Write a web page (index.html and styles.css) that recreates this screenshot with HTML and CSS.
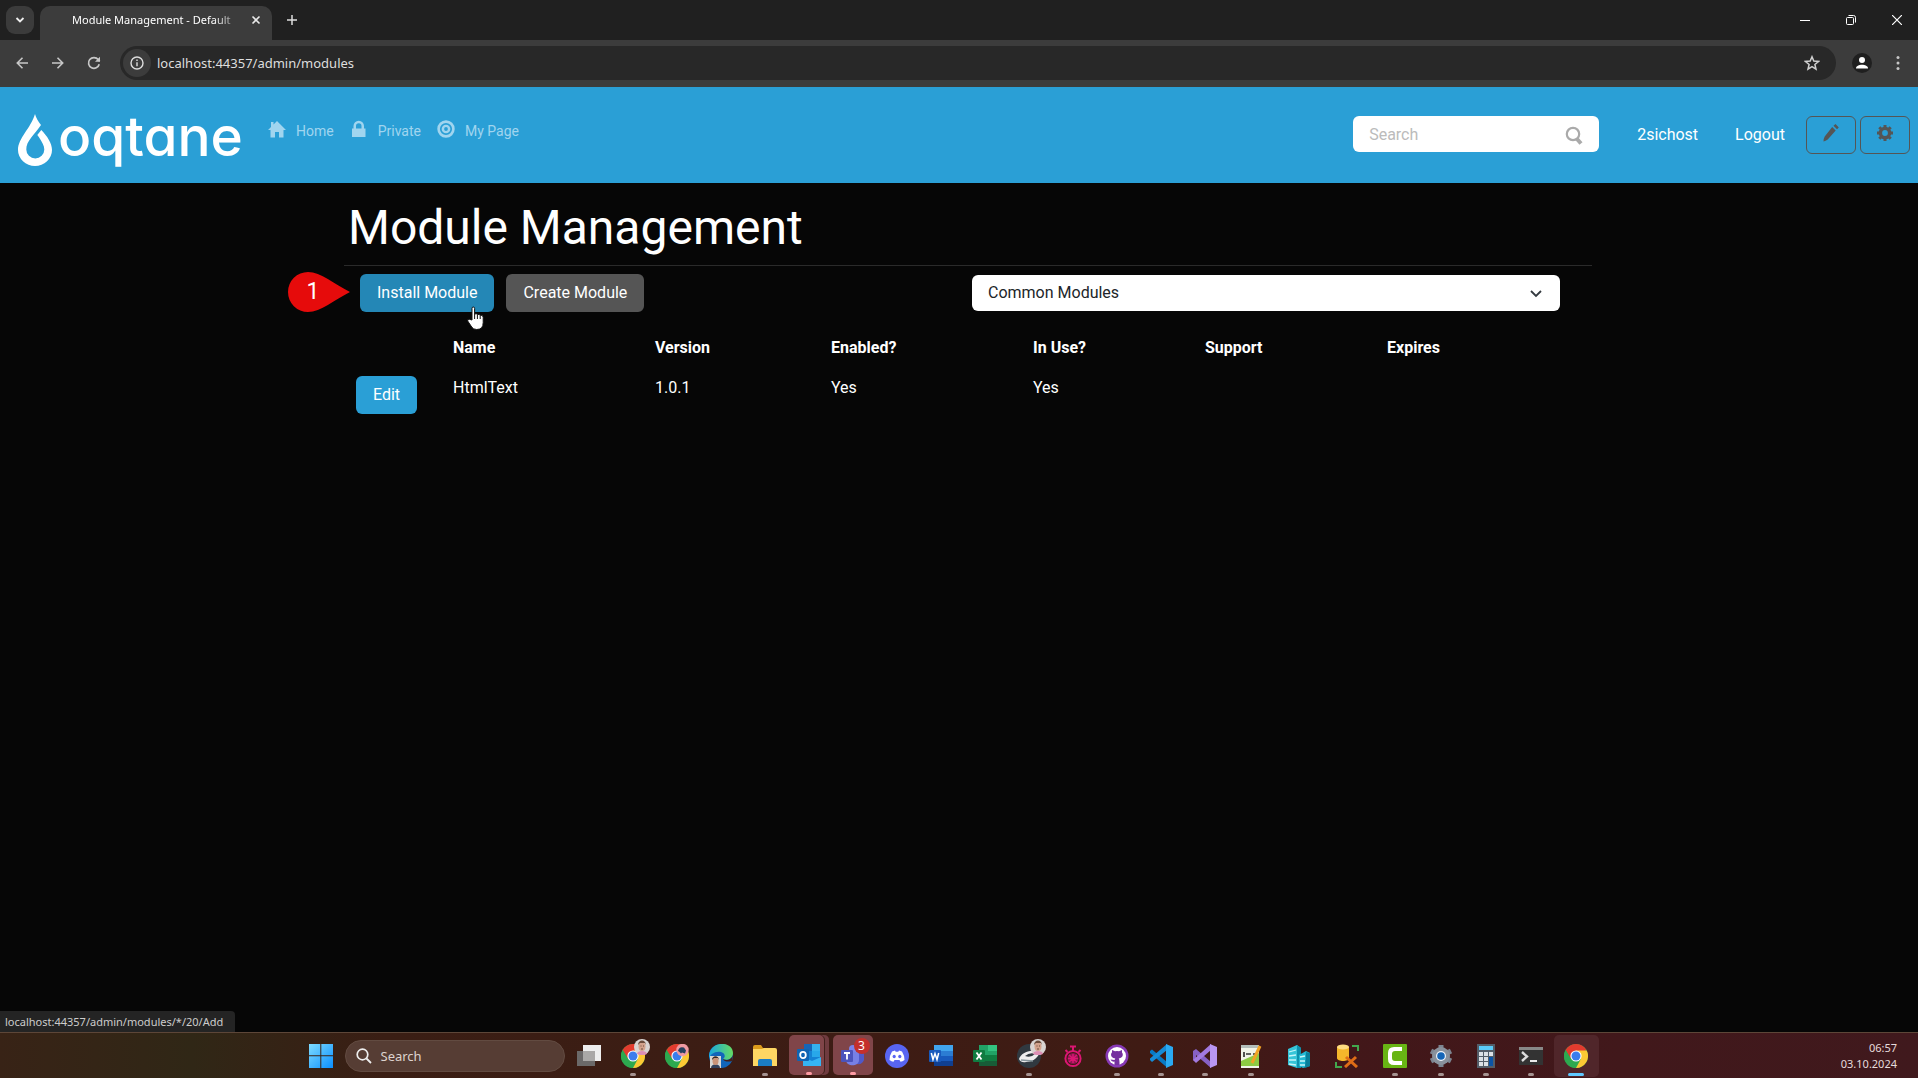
FILE: index.html
```html
<!DOCTYPE html>
<html lang="en">
<head>
<meta charset="UTF-8">
<meta name="viewport" content="width=device-width, initial-scale=1.0">
<title>Module Management - Default</title>
<link rel="stylesheet" href="styles.css">
</head>
<body>
  <!-- shared icon parts -->
  <svg class="sprite" aria-hidden="true">
    <symbol id="chrome" viewBox="0 0 24 24">
      <circle cx="12" cy="12" r="12" fill="#2da94f"/>
      <path d="M12 12 1.600 6A12 12 0 0 1 22.400 6Z" fill="#e33b2e"/>
      <path d="M12 6.500h10.700A12 12 0 0 1 12 24l4.800-9Z" fill="#fcc934"/>
      <path d="M1.600 6 7 15l5-3V6Z" fill="#e33b2e"/>
      <path d="M1.600 6 7.200 15 12 17.500 12 24A12 12 0 0 1 1.600 6Z" fill="#2da94f"/>
      <circle cx="12" cy="12" r="5.600" fill="#fff"/>
      <circle cx="12" cy="12" r="4.500" fill="#3b7ded"/>
    </symbol>
    <symbol id="face" viewBox="0 0 16 16">
      <circle cx="8" cy="8" r="8" fill="#d9d4d2"/>
      <path d="M3 15c0-4 10-4 10 0l-3 1H6Z" fill="#dc8fb4"/>
      <ellipse cx="8" cy="7.500" rx="3.500" ry="4.500" fill="#d3a28c"/>
      <path d="M4 6c0-6 8-6 8 0l-1-2H6Z" fill="#6b4c3c"/>
      <path d="M6.500 7h1M9 7h1M7 10h2" stroke="#6b4c3c"/>
    </symbol>
  </svg>

  <header class="tab-strip">
    <button class="tab-search" aria-label="Search tabs">
      <svg width="12" height="12" viewBox="0 0 12 12"><path d="m2.500 4 3.500 3.500L9.500 4" fill="none" stroke="#eee" stroke-width="1.800"/></svg>
    </button>
    <div class="tab">
      <span class="tab-title">Module Management - Default</span>
      <button class="tab-close" aria-label="Close tab">
        <svg width="10" height="10" viewBox="0 0 10 10"><path d="m1.500 1.500 7 7m0-7-7 7" stroke="#e8e8e8" stroke-width="1.600"/></svg>
      </button>
    </div>
    <button class="new-tab" aria-label="New tab">
      <svg width="12" height="12" viewBox="0 0 12 12"><path d="M6 1v10M1 6h10" stroke="#ddd" stroke-width="1.500"/></svg>
    </button>
    <div class="window-buttons">
      <button aria-label="Minimize"><svg width="10" height="10" viewBox="0 0 10 10"><path d="M0 5.500h10" stroke="#fff"/></svg></button>
      <button aria-label="Restore"><svg width="10" height="10" viewBox="0 0 10 10"><path d="M.5 3.500q0-1 1-1h5q1 0 1 1v5q0 1-1 1h-5q-1 0-1-1ZM2.500.5h5q2 0 2 2v5" fill="none" stroke="#fff"/></svg></button>
      <button aria-label="Close"><svg width="10" height="10" viewBox="0 0 10 10"><path d="m0 0 10 10M10 0 0 10" stroke="#fff" stroke-width="1.200"/></svg></button>
    </div>
  </header>

  <div class="toolbar">
    <div class="nav-buttons">
      <button aria-label="Back"><svg width="12" height="12" viewBox="0 0 12 12"><path d="M12 6H1.500M6.500.8 1.300 6l5.200 5.200" fill="none" stroke="#c7c7c7" stroke-width="1.600"/></svg></button>
      <button aria-label="Forward"><svg width="12" height="12" viewBox="0 0 12 12"><path d="M0 6h10.500M5.500.8 10.700 6l-5.200 5.200" fill="none" stroke="#c7c7c7" stroke-width="1.600"/></svg></button>
      <button aria-label="Reload"><svg width="14" height="14" viewBox="0 0 14 14"><path d="M12.200 8.200a5.400 5.400 0 1 1-1-4.600l1.500 1.600" fill="none" stroke="#c7c7c7" stroke-width="1.700"/><path d="M13 .8v5H8Z" fill="#c7c7c7"/></svg></button>
    </div>
    <div class="address-bar">
      <button class="site-info" aria-label="View site information">
        <svg width="14" height="14" viewBox="0 0 14 14"><circle cx="7" cy="7" r="6" fill="none" stroke="#ddd" stroke-width="1.400"/><path d="M7 6.200v4M7 3.500v1.500" stroke="#ddd" stroke-width="1.400"/></svg>
      </button>
      <input class="address" type="text" value="localhost:44357/admin/modules" aria-label="Address">
      <button class="bookmark" aria-label="Bookmark this tab">
        <svg width="16" height="16" viewBox="0 0 16 16"><path d="m8 1.800 1.800 4.300 4.700.4-3.600 3 1.100 4.600L8 11.700l-4 2.400 1.100-4.600-3.600-3 4.700-.4Z" fill="none" stroke="#d0d0d0" stroke-width="1.500"/></svg>
      </button>
    </div>
    <button class="profile" aria-label="Profile">
      <svg width="20" height="20" viewBox="0 0 20 20"><circle cx="10" cy="10" r="10" fill="#1f1f1f"/><circle cx="10" cy="7" r="3" fill="#fff"/><path d="M4 15.500c0-5 12-5 12 0Z" fill="#fff"/></svg>
    </button>
    <button class="menu" aria-label="Menu">
      <svg width="4" height="16" viewBox="0 0 4 16"><g fill="#c7c7c7"><circle cx="2" cy="2.500" r="1.500"/><circle cx="2" cy="8" r="1.500"/><circle cx="2" cy="13.500" r="1.500"/></g></svg>
    </button>
  </div>

  <div class="page">
    <nav class="site-header">
      <a class="logo" href="#">
        <svg width="34" height="52" viewBox="0 0 34 52"><path d="M17 0c1 4 3 7 6 11C17 20 8 27 8.300 35.500a8.900 8.900 0 0 0 18 0c0-4-2.300-7.500-5.500-12.500l-1.500-2 4-5C29 22 34 29 34 36A17 16 0 0 1 0 36C0 24 13 14 17 0Z" fill="#fff"/></svg>
        <span class="wordmark">oqtane</span>
      </a>
      <ul class="site-menu">
        <li><a href="#">
          <svg width="18" height="18" viewBox="0 0 18 18"><path d="m9 1 9 9h-2.500v7.500H11V12H7v5.500H2.500V10H0l3-3V2h2.500v2.500Z" fill="currentColor"/></svg>
          Home</a></li>
        <li><a href="#">
          <svg width="18" height="18" viewBox="0 0 18 18"><path d="M2 8.500h1.500V6a5 5 0 0 1 10.500 0v2.500h1.500V17H2ZM6 8.500h5.500V6A2.700 2.700 0 0 0 6 6Z" fill="currentColor"/></svg>
          Private</a></li>
        <li><a href="#">
          <svg width="18" height="18" viewBox="0.5 -0.5 19 19"><g fill="none" stroke="currentColor"><circle cx="10" cy="9" r="7.800" stroke-width="2.800"/><circle cx="10" cy="9" r="3.300" stroke-width="2.600"/></g></svg>
          My Page</a></li>
      </ul>
      <form class="site-search">
        <input type="text" placeholder="Search" aria-label="Search">
        <button type="button" aria-label="Search">
          <svg width="18" height="20" viewBox="0 0 18 20"><circle cx="8" cy="8" r="6.200" fill="none" stroke="#aaa" stroke-width="2.200"/><path d="m12 13 4 4.500" stroke="#aaa" stroke-width="4"/></svg>
        </button>
      </form>
      <a class="user-link" href="#">2sichost</a>
      <a class="user-link" href="#">Logout</a>
      <div class="edit-buttons">
        <button aria-label="Edit page">
          <svg width="16" height="18" viewBox="0 0 16 18"><path d="m9.200 3 3.500 3.500-8 9q-2 1.500-4.200 2 0-3 1.200-5ZM10.500 1.800 12.500 0l3.300 3.500L14 5.300Z" fill="#555"/></svg>
        </button>
        <button aria-label="Control panel">
          <svg width="16" height="16" viewBox="0 0 16 16"><circle cx="8" cy="8" r="4.600" fill="none" stroke="#555" stroke-width="3.400"/><path d="M8 0v3m0 10v3M0 8h3m10 0h3M2.300 2.300l2 2m7.400 7.400 2 2m0-11.400-2 2m-7.400 7.400-2 2" stroke="#555" stroke-width="3"/></svg>
        </button>
      </div>
    </nav>

    <main>
      <h1>Module Management</h1>
      <hr>
      <div class="actions">
        <div class="action-buttons">
          <div class="install">
            <button class="btn btn-primary active">Install Module</button>
            <div class="marker">
              <svg width="62" height="40" viewBox="0 0 62 40"><path d="M20 0C33 0 46 12 62 20 46 28 33 40 20 40A20 20 0 0 1 20 0Z" fill="#e60b0b"/></svg>
              <span>1</span>
            </div>
            <svg class="pointer" width="18" height="25" viewBox="0 0 18 25"><path d="M5 14V2.500q0-1.500 1.300-1.500T7.600 2.500V8q2-.8 2.800.6 2-.8 2.800.6 3-.6 3 2.300v5q0 7-6.500 7-3.500 0-5-2.500l-4-6q-.5-2 1.500-1.800Z" fill="#fff" stroke="#111"/><path d="M7.600 8v5m2.800-4.400V13m2.800-3.800V13" stroke="#111"/></svg>
          </div>
          <button class="btn btn-secondary">Create Module</button>
        </div>
        <div class="filter">
          <select aria-label="Module category"><option>Common Modules</option></select>
          <svg width="14" height="10" viewBox="0 0 14 10"><path d="m2 2 5 5 5-5" fill="none" stroke="#343a40" stroke-width="1.800"/></svg>
        </div>
      </div>

      <table class="modules">
        <colgroup>
          <col class="col-edit">
          <col class="col-name">
          <col class="col-version">
          <col class="col-enabled">
          <col class="col-used">
          <col class="col-support">
          <col>
        </colgroup>
        <thead>
          <tr><th></th><th>Name</th><th>Version</th><th>Enabled?</th><th>In Use?</th><th>Support</th><th>Expires</th></tr>
        </thead>
        <tbody>
          <tr>
            <td><button class="btn btn-primary">Edit</button></td>
            <td>HtmlText</td><td>1.0.1</td><td>Yes</td><td>Yes</td><td></td><td></td>
          </tr>
        </tbody>
      </table>
    </main>
    <div class="status">localhost:44357/admin/modules/*/20/Add</div>
  </div>

  <footer class="taskbar">
    <div class="taskbar-center">
      <button class="start" aria-label="Start">
        <svg width="24" height="24" viewBox="0 0 24 24"><defs><linearGradient id="win" x2="1" y2="1"><stop stop-color="#7fdcff"/><stop offset="1" stop-color="#0a8fff"/></linearGradient></defs><path d="M0 0h11.300v11.300H0ZM12.300 0H24v11.300H12.300ZM0 12.300h11.300V24H0ZM12.300 12.300H24V24H12.300Z" fill="url(#win)"/></svg>
      </button>
      <button class="task-search">
        <svg width="16" height="16" viewBox="0 0 16 16"><circle cx="6.500" cy="6.500" r="5.300" fill="none" stroke="#eee" stroke-width="1.700"/><path d="m10.500 10.500 4.500 4.500" stroke="#eee" stroke-width="1.800"/></svg>
        Search
      </button>
      <div class="apps">
        <button class="app" aria-label="Task view">
          <svg viewBox="0 0 24 24"><path d="M6 1h18v16H6Z" fill="#eee"/><path d="M0 7h18v15H0Z" fill="#6b6969"/><path d="M6 7h12v10H6Z" fill="#aaa8a7"/></svg>
        </button>
        <button class="app running" aria-label="Chrome">
          <svg viewBox="0 0 24 24"><use href="#chrome"/></svg>
          <svg class="avatar" viewBox="0 0 16 16"><use href="#face"/></svg>
        </button>
        <button class="app" aria-label="Chrome profile">
          <svg viewBox="0 0 24 24"><use href="#chrome"/><circle cx="17.500" cy="6" r="6.200" fill="#ef9aa2"/><path d="M13 7q1-5 6-3.500l2 3-1 3-3-1-1 1-2-2Z" fill="#25405e"/></svg>
        </button>
        <button class="app" aria-label="Edge">
          <svg viewBox="0 0 24 24"><defs><linearGradient id="edge" x2="1"><stop stop-color="#1aa5df"/><stop offset="1" stop-color="#65dc62"/></linearGradient></defs><circle cx="12" cy="12" r="12" fill="#1265ba"/><path d="M0 11C2-4 24-3 24 9c0 6-6 8-10 6 3-2 2-6-2-7C6 7 1 10 0 15Z" fill="url(#edge)"/><path d="M14 15c4 2 8 1 10-4-1 3 0 5-1 6-3 1-8 1-9-2Z" fill="#42201a"/><path d="M1 12h11v12H1Z" fill="#d8d6d3"/><path d="M2 24c0-5 9-5 9 0Z" fill="#32405b"/><ellipse cx="6.500" cy="17" rx="3" ry="4" fill="#c99378"/><path d="M3 16c0-5 7-5 7 0l-1-2H5Z" fill="#3b2824"/></svg>
        </button>
        <button class="app running" aria-label="File Explorer">
          <svg viewBox="0 0 24 24"><path d="M0 3q0-2 2-2h6l2 3h12v8H0Z" fill="#dc9b1c"/><path d="M0 5h9l2-1h11q2 0 2 2v16H0Z" fill="#fdd663"/><path d="M5 17q0-2 2-2h10q2 0 2 2v5H5Z" fill="#1b7dc4"/></svg>
        </button>
        <button class="app running alert stacked" aria-label="Outlook">
          <svg viewBox="0 0 24 24"><path d="M7 1h16v21H7Z" fill="#1482d5"/><path d="M7 1h8v7H7Z" fill="#1566b8"/><path d="M15 1h8v7h-8Z" fill="#35b1ed"/><path d="M15 8h8v6h-8Z" fill="#28a8ea"/><path d="M6 14l9 4 9-4v9H6Z" fill="#36b4f3"/><rect y="6" width="12" height="12" rx="1" fill="#0f64b3"/><ellipse cx="6" cy="12" rx="2.800" ry="3.200" fill="none" stroke="#fff" stroke-width="1.800"/></svg>
        </button>
        <button class="app running alert" aria-label="Teams">
          <svg viewBox="0 0 24 24"><circle cx="12" cy="6" r="4" fill="#7b83eb"/><path d="M14 9h9v8q-2 5-7 4Z" fill="#5059c9"/><path d="M5 9h13v8c0 7-13 7-13 0Z" fill="#7780e5"/><rect y="7" width="12" height="12" rx="1" fill="#4b53bc"/><path d="M3 10h6M6 10v6.500" stroke="#fff" stroke-width="1.800"/></svg>
          <span class="badge">3</span>
        </button>
        <button class="app" aria-label="Discord">
          <svg viewBox="0 0 24 24"><circle cx="12" cy="12" r="12" fill="#5865f2"/><path d="M7 7.500 10 6.500l.7 1.200h2.600L14 6.500l3 1q2.500 4 2.500 8.500-2 1.500-4 1.800l-1-1.700h-5l-1 1.700q-2-.3-4-1.800 0-4.500 2.500-8.500Z" fill="#fff"/><ellipse cx="9.200" cy="12.500" rx="1.600" ry="1.800" fill="#5865f2"/><ellipse cx="14.800" cy="12.500" rx="1.600" ry="1.800" fill="#5865f2"/></svg>
        </button>
        <button class="app" aria-label="Word">
          <svg viewBox="0 0 24 24"><path d="M5 1h19v6H5Z" fill="#41a5ee"/><path d="M5 7h19v5H5Z" fill="#2b7cd3"/><path d="M5 12h19v5H5Z" fill="#185abd"/><path d="M5 17h19v5H5Z" fill="#103f91"/><rect y="6" width="12" height="12" rx="1" fill="#185abd"/><path d="m2.300 9 1.700 6.500 2-6 2 6L9.700 9" fill="none" stroke="#fff" stroke-width="1.500"/></svg>
        </button>
        <button class="app" aria-label="Excel">
          <svg viewBox="0 0 24 24"><path d="M6 1h9v10H6Z" fill="#21a366"/><path d="M15 1h9v6h-9Z" fill="#33c481"/><path d="M15 7h9v5h-9Z" fill="#21a366"/><path d="M6 11h18v6H6Z" fill="#107c41"/><path d="M6 17h18v5H6Z" fill="#185c37"/><rect y="6" width="12" height="12" rx="1" fill="#107c41"/><path d="m3.500 8.500 5 7m0-7-5 7" stroke="#fff" stroke-width="1.800"/></svg>
        </button>
        <button class="app running" aria-label="Screen capture">
          <svg viewBox="0 0 24 24"><circle cx="12" cy="12" r="12" fill="#303940"/><path d="M2 15c2-5 8-9 16-8l4 3c-2 5-8 8-13 8q-5 1-7-3Z" fill="#eee"/><path d="M8 12q5-4 10-2-4 4-10 2Z" fill="#303940"/><path d="m4 16 12 1" stroke="#87969c" stroke-width="1.500"/></svg>
          <svg class="avatar" viewBox="0 0 16 16"><use href="#face"/></svg>
        </button>
        <button class="app" aria-label="Stopwatch">
          <svg viewBox="0 0 24 24"><circle cx="12" cy="14.500" r="5.500" fill="#8f1550"/><g fill="none" stroke="#dc1673"><circle cx="12" cy="14.500" r="7.600" stroke-width="2"/><path d="M9 2.500h6M12 3v4M4.500 6l2 2m13-2-2 2" stroke-width="2"/><path d="m8 11 8 7m0-7-8 7m4-8v9m-5-4.500h10" stroke-width="1.500"/></g></svg>
        </button>
        <button class="app running" aria-label="GitHub Desktop">
          <svg viewBox="0 0 24 24"><circle cx="12" cy="12" r="11.500" fill="#8739b5"/><circle cx="12" cy="12" r="9" fill="#fff"/><path d="M9.500 21v-3.500q-3 .7-4-2 2 0 4 .6l.8-1.600C4.500 13.500 6 9 7 8.500V6l3 1.300q2-.5 4 0L17 6v2.500c1 1 2 5-3.300 6q1 .8.800 6.500Z" fill="#7631a0"/></svg>
        </button>
        <button class="app running" aria-label="Visual Studio Code">
          <svg viewBox="0 0 24 24"><path d="m1 7 2-1.500L18 18v5.500L1 9Z" fill="#0879c4"/><path d="m1 16 2 2L18 6V0L1 14.500Z" fill="#168cd7"/><path d="m17 0 7 3v18l-7 3Z" fill="#2aaaf2"/></svg>
        </button>
        <button class="app running" aria-label="Visual Studio">
          <svg viewBox="0 0 24 24"><path d="m0 7 3-2 15 13v6L3 11v7l-3-2Z" fill="#8661c5"/><path d="m3 19 15-13V0L0 16Z" fill="#a27ae0"/><path d="m17 0 7 3v18l-7 3Z" fill="#b996f3"/></svg>
        </button>
      </div>
      <div class="apps apps-wide">
        <button class="app running" aria-label="Notepad++">
          <svg viewBox="0 0 24 24"><path d="M2 2h18v22H2Z" fill="#f0f3e9"/><path d="M2 1h18v3H2Z" fill="#b3bdba"/><path d="M2 17 20 9v13H2Z" fill="#8dca43"/><path d="M5 8v5m2-3h5m2 0h3" stroke="#333" stroke-width="1.700"/><path d="M21 2 13 19" stroke="#f1a325" stroke-width="3"/></svg>
        </button>
        <button class="app" aria-label="Azure storage">
          <svg viewBox="0 0 24 24"><path d="m1 5 9-4 4 3v19l-4 1-9-3Z" fill="#36c5d8"/><path d="m10 1 4 3v20h-4Z" fill="#0d91ad"/><path d="m12 11 7-4 4 2v13l-7 2-4-2Z" fill="#24b9d4"/><path d="m19 8 4 1v13l-5 2Z" fill="#087f9b"/><path d="m2 8 7-2M2 12l7-1M2 16h7M2 20l7 1m4-8 5-1m-5 5h5m-5 4h5" stroke="#c8f6fa" stroke-width="1.300"/></svg>
        </button>
        <button class="app" aria-label="Database tools">
          <svg viewBox="0 0 24 24"><path d="M2 3v11c0 4 12 4 12 0V3Z" fill="#f5b72b"/><ellipse cx="8" cy="3" rx="6" ry="2.500" fill="#ffdc80"/><path d="M17 2h6v5M1 18v5h6" fill="none" stroke="#42a84d" stroke-width="2"/><path d="m11 13 11 10m-1-10L10 23" stroke="#df6d17" stroke-width="3"/></svg>
        </button>
        <button class="app running" aria-label="Camtasia">
          <svg viewBox="0 0 24 24"><rect width="24" height="24" rx="1" fill="#68b514"/><path d="M19 3v4h-7q-3 0-3 3v4q0 3 3 3h7v4h-8q-6 0-6-6V9q0-6 6-6Z" fill="#fff"/></svg>
        </button>
      </div>
      <div class="apps">
        <button class="app running" aria-label="Settings">
          <svg viewBox="0 0 24 24"><g stroke="#7c8490" stroke-width="5"><path d="M12 1v22M2 7l20 10M2 17 22 7"/></g><circle cx="12" cy="12" r="9" fill="#89919c"/><circle cx="12" cy="12" r="5" fill="#eef4fa"/><circle cx="12" cy="12" r="3.800" fill="#1465b7"/></svg>
        </button>
        <button class="app running" aria-label="Calculator">
          <svg viewBox="0 0 24 24"><path d="M3 0h18v24H3Z" fill="#535d68"/><path d="M5 2h14v4H5Z" fill="#5acbfa"/><path d="M5 8h4v4H5Zm5 0h4v4h-4Zm5 0h4v4h-4ZM5 13h4v4H5Zm5 0h4v4h-4Zm-5 5h4v4H5Zm5 0h4v4h-4Z" fill="#dce1e6"/><path d="M15 13h4v9h-4Z" fill="#0b54a6"/></svg>
        </button>
        <button class="app running" aria-label="Terminal">
          <svg viewBox="0 0 24 24"><path d="M0 3h24v18H0Z" fill="#333"/><path d="M0 3h24v3H0Z" fill="#888"/><path d="m3 8 5 4.500-5 4.500" fill="none" stroke="#ddd" stroke-width="2.400"/><path d="M11 17h7" stroke="#fff" stroke-width="1.800"/></svg>
        </button>
        <button class="app running current" aria-label="Chrome window">
          <svg viewBox="0 0 24 24"><use href="#chrome"/></svg>
        </button>
      </div>
    </div>
    <div class="clock"><time>06:57</time><time>03.10.2024</time></div>
  </footer>
</body>
</html>
```
FILE: styles.css
```css
* {
  box-sizing: border-box;
}
body {
  margin: 0;
  min-height: 100vh;
  display: flex;
  flex-direction: column;
  background-color: #060606;
  color: white;
  font-family: Roboto, sans-serif;
  font-size: 16px;
  line-height: 24px;
}
button {
  border: none;
  padding: 0;
  background: none;
  color: inherit;
  font: inherit;
}
a {
  color: inherit;
  text-decoration: none;
}
svg {
  display: block;
  flex-shrink: 0;
}
.sprite {
  position: absolute;
  width: 0;
  height: 0;
}

/* browser */
.tab-strip, .toolbar, .status, .taskbar {
  font-family: "Noto Sans", "Open Sans", sans-serif;
}
.tab-strip {
  display: flex;
  height: 40px;
  padding-left: 6px;
  background-color: #202020;
}
.tab-search {
  display: grid;
  place-items: center;
  width: 28px;
  height: 28px;
  margin: 6px 6px 0 0;
  border-radius: 9px;
  background-color: #3b3b3b;
}
.tab {
  display: flex;
  align-items: center;
  width: 232px;
  margin-top: 6px;
  padding: 0 10px 6px 32px;
  border-radius: 10px 10px 0 0;
  background-color: #3c3c3c;
}
.tab-title {
  flex: 1;
  white-space: nowrap;
  font-size: 11px;
  mask-image: linear-gradient(to right, #000 86%, rgba(0,0,0,0.3));
}
.tab-close, .new-tab {
  display: grid;
  place-items: center;
  width: 12px;
}
.tab-close {
  margin-left: 14px;
}
.new-tab {
  width: 40px;
  height: 33px;
  align-self: center;
}
.window-buttons {
  display: flex;
  margin: 0 -2px 0 auto;
}
.window-buttons button {
  display: grid;
  place-items: center;
  width: 46px;
}
.toolbar {
  display: flex;
  align-items: center;
  height: 47px;
  padding: 0 18px 2px 4px;
  background-color: #3c3c3c;
}
.nav-buttons {
  display: flex;
  width: 116px;
}
.nav-buttons button {
  display: grid;
  place-items: center;
  width: 36px;
  height: 34px;
}
.address-bar {
  flex: 1;
  display: flex;
  align-items: center;
  height: 34px;
  padding: 0 16px 0 3px;
  border-radius: 17px;
  background-color: #282828;
}
.site-info {
  display: grid;
  place-items: center;
  width: 28px;
  height: 28px;
  border-radius: 50%;
  background-color: #3c3c3c;
}
.address {
  flex: 1;
  border: none;
  padding: 0 6px;
  background: none;
  color: #dedede;
  font: inherit;
  font-size: 13px;
}
.profile {
  margin-left: 16px;
}
.menu {
  margin-left: 24px;
}
.status {
  position: absolute;
  left: 0;
  bottom: 0;
  padding: 0 12px 0 5px;
  border-radius: 0 4px 0 0;
  background-color: #242424;
  color: #ccc;
  font-size: 11px;
  line-height: 21px;
}

/* site */
.page {
  flex: 1;
  position: relative;
}
.site-header {
  display: flex;
  align-items: center;
  height: 96px;
  padding: 0 8px 0 18px;
  background-color: #2a9fd6;
}
.logo {
  display: flex;
  align-items: center;
  gap: 6px;
  width: 250px;
  padding-top: 10px;
}
.wordmark {
  font-family: Inter, sans-serif;
  font-size: 55px;
  font-weight: 500;
  font-feature-settings: "cv11";
  line-height: 52px;
  padding-bottom: 8px;
}
.site-menu {
  display: flex;
  gap: 16px;
  margin: 0 auto 8px 0;
  padding: 0;
  list-style: none;
  color: #a0d5ef;
  font-size: 14px;
}
.site-menu a {
  display: flex;
  align-items: center;
  gap: 10px;
}
.site-menu svg {
  margin-bottom: 4px;
}
.site-search {
  position: relative;
  width: 246px;
  margin: 0 22px 2px 0;
}
.site-search input {
  display: block;
  width: 100%;
  height: 36px;
  border: none;
  border-radius: 6px;
  padding: 0 16px;
  background-color: white;
  font: inherit;
}
.site-search input::placeholder {
  color: #bbb;
}
.site-search button {
  position: absolute;
  right: 16px;
  top: 10px;
}
.user-link {
  padding: 0 16px;
  margin-right: 5px;
}
.edit-buttons {
  display: flex;
  gap: 4px;
}
.edit-buttons button {
  display: grid;
  place-items: center;
  width: 50px;
  height: 38px;
  padding-bottom: 4px;
  border: 1px solid #555;
  border-radius: 6px;
}
main {
  padding: 16px 326px 16px 344px;
}
h1 {
  margin: 0;
  padding-left: 4px;
  font-size: 48px;
  font-weight: 400;
  line-height: 58px;
}
hr {
  margin: 8px 0;
  border: none;
  border-top: 1px solid #2a2a2a;
}
.actions {
  display: grid;
  grid-template-columns: 1fr 1fr;
  align-items: center;
}
.action-buttons {
  display: flex;
  gap: 12px;
  padding-left: 16px;
}
.install {
  position: relative;
}
.marker {
  position: absolute;
  left: -72px;
  top: -2px;
}
.marker span {
  position: absolute;
  left: 0;
  top: 0;
  width: 50px;
  font-size: 23px;
  line-height: 40px;
  text-align: center;
}
.pointer {
  position: absolute;
  right: 9px;
  top: 32px;
}
.btn {
  height: 38px;
  padding: 0 17px;
  border-radius: 6px;
  white-space: nowrap;
}
.btn-primary {
  background-color: #2a9fd6;
}
.btn-primary.active {
  background-color: #2487b6;
}
.btn-secondary {
  background-color: #555;
}
.filter {
  position: relative;
  padding: 0 32px 0 4px;
}
.filter select {
  appearance: none;
  display: block;
  width: 100%;
  height: 36px;
  border: none;
  border-radius: 6px;
  padding: 0 16px;
  background-color: white;
  color: #212529;
  font: inherit;
}
.filter svg {
  position: absolute;
  right: 49px;
  top: 14px;
  pointer-events: none;
}
.modules {
  table-layout: fixed;
  width: calc(100% - 16px);
  margin: 16px 4px 0;
  border-collapse: collapse;
}
.modules th, .modules td {
  padding: 8px;
  text-align: left;
  vertical-align: top;
}
.col-edit {
  width: 97px;
}
.col-name, .col-enabled {
  width: 202px;
}
.col-version {
  width: 176px;
}
.col-used {
  width: 172px;
}
.col-support {
  width: 182px;
}

/* taskbar */
.taskbar {
  display: grid;
  grid-template-columns: 1fr auto 1fr;
  align-items: center;
  height: 46px;
  padding-right: 21px;
  border-top: 1px solid #5d4638;
  background: linear-gradient(to right, #382316, #302716 10%, #3a1e14 20%, #3f1b14 60%, #421719 70%, #40191d);
}
.taskbar-center {
  grid-column: 2;
  display: flex;
  align-items: center;
}
.start {
  margin-right: 12px;
  padding-left: 10px;
}
.task-search {
  display: flex;
  align-items: center;
  gap: 9px;
  width: 220px;
  height: 32px;
  margin-right: 2px;
  padding: 0 10px;
  border-radius: 16px;
  border: 1px solid #624b41;
  background-color: #563d34;
  color: #ddd3cf;
  font-size: 13px;
}
.apps {
  display: flex;
}
.app {
  position: relative;
  display: grid;
  place-items: center;
  width: 44px;
  height: 42px;
}
.apps-wide .app {
  width: 48px;
}
.apps-wide + .apps .app {
  width: 45px;
}
.app > svg {
  width: 24px;
  height: 24px;
}
.app > .avatar {
  position: absolute;
  width: 16px;
  height: 16px;
  right: 5px;
  top: 4px;
}
.app.running::after {
  content: "";
  position: absolute;
  left: 50%;
  bottom: 1px;
  width: 6px;
  height: 3px;
  margin-left: -3px;
  border-radius: 2px;
  background-color: #a59391;
}
.app.alert {
  width: 40px;
  height: 40px;
  margin: 0 2px;
  border-radius: 5px;
  background-color: #804549;
}
.app.stacked {
  box-shadow: inset -4px 0 #6f3b3f, inset -5px 0 #42201c;
}
.app.alert::after {
  bottom: 0;
  background-color: #ff9ca4;
}
.app.current {
  border-radius: 5px;
  background-color: #50262a;
}
.app.current::after {
  width: 16px;
  margin-left: -8px;
  background-color: #5fc8ff;
}
.badge {
  position: absolute;
  right: 3px;
  top: 3px;
  width: 16px;
  height: 16px;
  border-radius: 50%;
  background-color: #c4302b;
  font-size: 12px;
  line-height: 16px;
}
.clock {
  display: flex;
  flex-direction: column;
  align-items: flex-end;
  color: #e6dcdc;
  font-size: 11px;
  line-height: 16px;
}
```
